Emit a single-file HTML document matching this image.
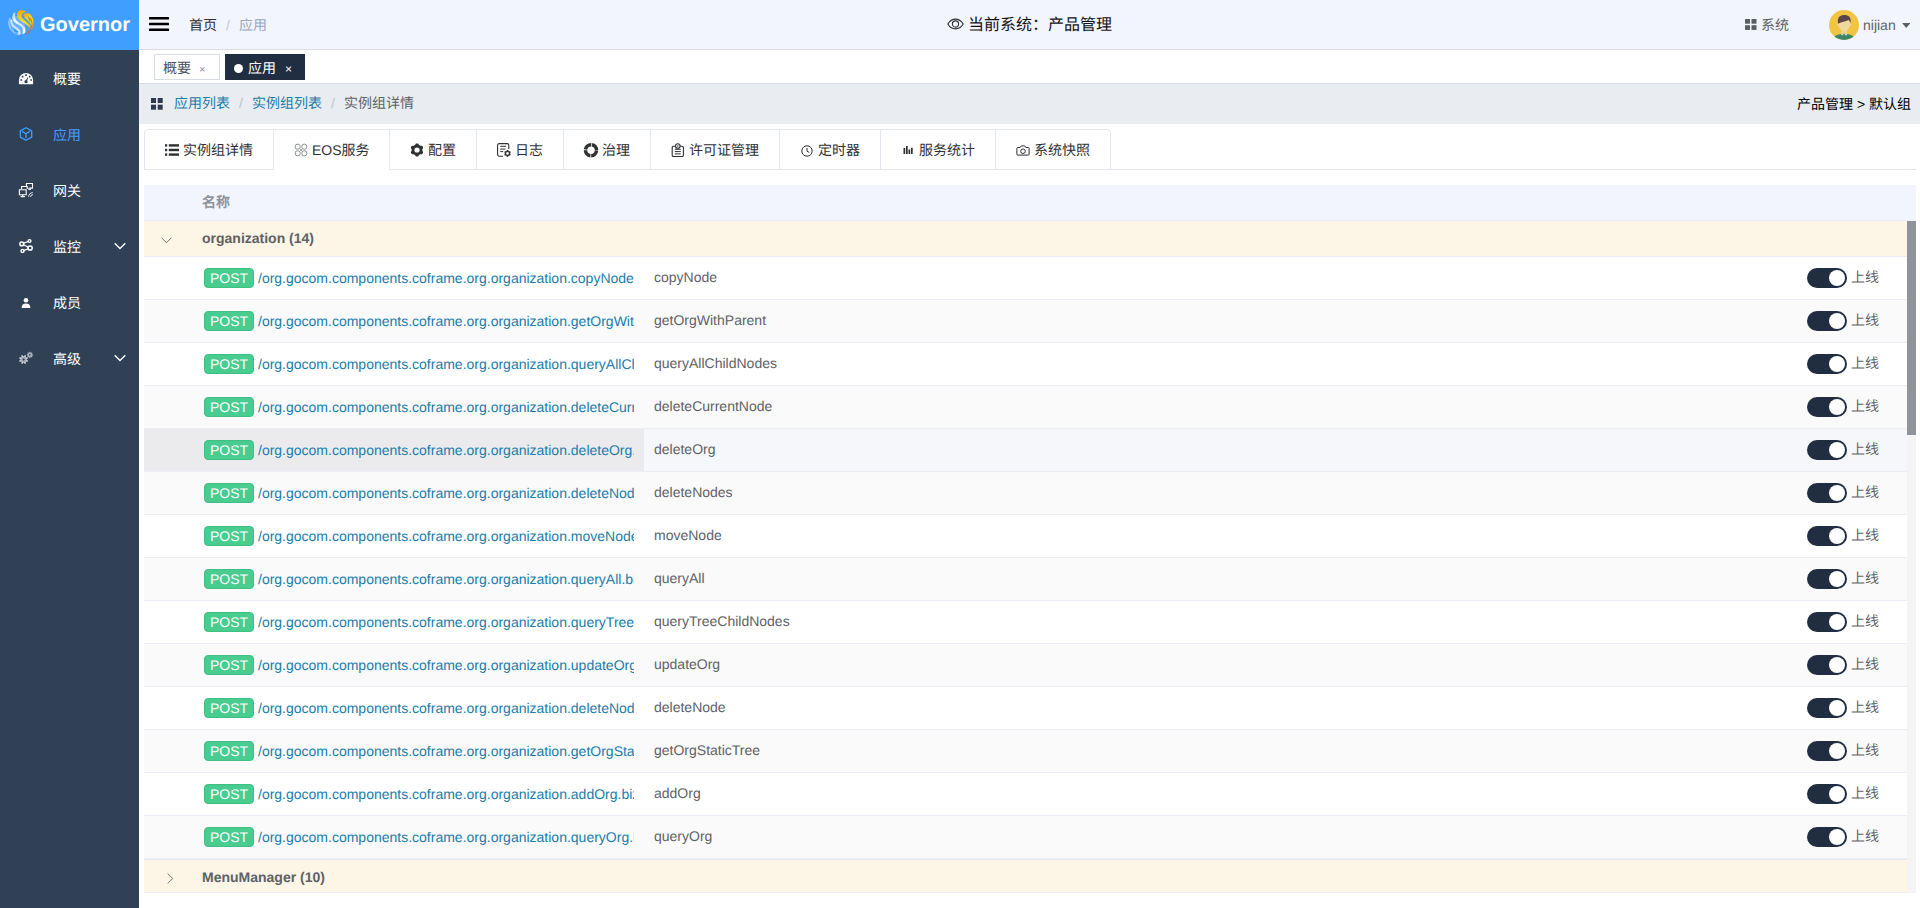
<!DOCTYPE html>
<html lang="zh-CN">
<head>
<meta charset="utf-8">
<title>Governor</title>
<style>
*{box-sizing:border-box;margin:0;padding:0}
html,body{width:1920px;height:908px;overflow:hidden;background:#fff}
body{position:relative;font-family:"Liberation Sans",sans-serif;font-size:14px;color:#606266;line-height:20px;text-rendering:geometricPrecision}
.abs{position:absolute}
.cj{display:inline-block;text-align:justify;text-align-last:justify;white-space:nowrap}
svg{display:block}
/* sidebar */
#side{position:absolute;left:0;top:0;width:139px;height:908px;background:#304156}
#logo{position:absolute;left:0;top:0;width:139px;height:50px;background:#409eff}
#logo .t{position:absolute;left:40px;top:13px;height:24px;line-height:24px;font-size:20px;font-weight:bold;color:#fff;white-space:nowrap}
.mi{position:absolute;left:0;width:139px;height:56px}
.mi .ic{position:absolute;left:19px;top:20px;width:14px;height:14px}
.mi .tx{position:absolute;left:53px;top:18px;height:20px;line-height:20px;font-size:14px;color:#fff;white-space:nowrap}
.mi.act .tx{color:#409eff}
.mi .ar{position:absolute;left:114px;top:23px;width:12px;height:8px}
/* navbar */
#nav{position:absolute;left:139px;top:0;width:1781px;height:50px;background:#f2f5fd;border-bottom:1px solid #dcdcde}
#nav .t{position:absolute;height:20px;line-height:20px;white-space:nowrap}
/* tags */
#tags{position:absolute;left:139px;top:50px;width:1781px;height:34px;background:#fff;border-bottom:1px solid #d8dce5}
.tag{position:absolute;top:4px;height:26px;line-height:24px;font-size:12px;border:1px solid #d8dce5;color:#495060;background:#fff;white-space:nowrap}
.tag.on{background:#212d40;border-color:#212d40;color:#fff}
/* crumb */
#crumb{position:absolute;left:139px;top:84px;width:1781px;height:40px;background:#e9ecf1}
#crumb .t{position:absolute;top:9px;height:20px;line-height:20px;white-space:nowrap;font-size:14px}
.lk{color:#1b7dab}
.sep{color:#c0c4cc}
/* tabs */
#tabs{position:absolute;left:144px;top:129px;width:1772px;height:41px;border-bottom:1px solid #e4e7ed}
.tab{position:absolute;top:0;height:41px;border:1px solid #e4e7ed;border-left:none;background:#fff}
.tab .ic{position:absolute;left:20px;top:13px;width:14px;height:14px}
.tab .tx{position:absolute;left:38px;top:10px;height:20px;line-height:20px;color:#303133;font-size:14px;white-space:nowrap}
/* table */
#th{position:absolute;left:144px;top:185px;width:1772px;height:36px;background:#f2f5fd;border-bottom:1px solid #ebeef5}
.grp{position:absolute;left:144px;width:1763px;height:36px;background:#fdf5e6;border-bottom:1px solid #ebeef5}
.grp .tx{position:absolute;left:58px;top:7px;height:20px;line-height:20px;font-weight:bold;color:#606266;white-space:nowrap}
.row{position:absolute;left:144px;width:1763px;height:43px;border-bottom:1px solid #ebeef5;background:#fff}
.row.s{background:#fafafa}
.row.hv{background:#f5f7fa}
.row.hv .fx{position:absolute;left:0;top:0;width:500px;height:42px;background:#ebebed}
.row .post{position:absolute;left:60px;top:11px;width:50px;height:20px;line-height:18px;border-radius:4px;background:#49cc90;color:#fff;text-align:center;font-size:14px;border:1px solid #3fbf83}
.row .url{position:absolute;left:114px;top:11px;width:376px;height:20px;line-height:20px;overflow:hidden;white-space:nowrap;color:#1b7dab}
.row .nm{position:absolute;left:510px;top:10px;height:20px;line-height:20px;white-space:nowrap;color:#606266}
.row .sw{position:absolute;left:1663px;top:11px;width:40px;height:20px;border-radius:10px;background:#212d40}
.row .sw i{position:absolute;left:22px;top:2px;width:16px;height:16px;border-radius:8px;background:#fff}
.row .on{position:absolute;left:1707px;top:10px;height:20px;line-height:20px;white-space:nowrap;color:#606266}
</style>
</head>
<body>
<!-- SIDEBAR -->
<div id="side">
  <div id="logo"><svg class="abs" style="left:8px;top:10px" width="26" height="26" viewBox="0 0 26 26">
<defs>
<clipPath id="lc"><circle cx="13" cy="13" r="12.900"/></clipPath>
<linearGradient id="ly" x1="0.25" y1="0" x2="0.6" y2="1"><stop offset="0" stop-color="#ffa000"/><stop offset="0.22" stop-color="#ffc800"/><stop offset="0.5" stop-color="#ffe51a"/><stop offset="0.72" stop-color="#ffc414"/><stop offset="0.86" stop-color="#ee7f1c"/><stop offset="1" stop-color="#d8501c"/></linearGradient>
<linearGradient id="ly2" x1="0" y1="0" x2="0.5" y2="1"><stop offset="0" stop-color="#ff9a00"/><stop offset="0.3" stop-color="#ffc60a"/><stop offset="0.8" stop-color="#ffd414"/><stop offset="1" stop-color="#f5a51c"/></linearGradient>
<linearGradient id="lw" x1="0" y1="0" x2="0.5" y2="1"><stop offset="0" stop-color="#9fd0f7"/><stop offset="0.4" stop-color="#ffffff"/><stop offset="0.8" stop-color="#d4e9f8"/><stop offset="1" stop-color="#ffffff"/></linearGradient>
<filter id="lf" x="-10%" y="-10%" width="120%" height="120%"><feGaussianBlur stdDeviation="0.450"/></filter>
</defs>
<g clip-path="url(#lc)" filter="url(#lf)">
<ellipse cx="8.500" cy="15.500" rx="8.500" ry="10" fill="#fff" opacity=".2" transform="rotate(-25 8.500 15.500)"/>
<path d="M1.800 7C.3 10.500 .3 15 2.500 18.500 3.500 20 5 21.500 7 22.500" fill="none" stroke="#fff" stroke-width="1" opacity=".45"/>
<path d="M5 3.300C3.500 5.500 3.500 8 4.500 10" fill="none" stroke="#1685cc" stroke-width="1.100" opacity=".8"/>
<path d="M2.300 9.500C1.800 12.800 2.900 15.500 5.500 17.600c2 1.400 4 2.400 4.500 4.400 .2 1-.2 1.800-1 2.500L12 24.800c1-1.800 .8-3.800-.5-5.300-1.500-1.700-4-2.500-5.700-4.500C4.500 13.500 4 11.500 4.300 9.300z" fill="#fff" opacity=".66"/>
<path d="M6 20c1.500 1.500 3 2 4 1.500" fill="none" stroke="#1685cc" stroke-width="1.300" opacity=".7"/>
<path d="M5.300 2.900C3.700 5.200 3.700 8.800 5.900 11.500c2.100 2.500 6.100 3.500 7.900 5.800 1.200 1.500 1.500 4 .5 7.200L17 23c1-2.500 .5-5-1-6.800-2-2.400-6-3.700-7.700-6C6.800 8 6.500 5 7.500 2.500z" fill="url(#lw)" opacity=".93"/>
<path d="M12.100 .1C9.500 1.500 8.600 3.500 9.100 5.400c.2 1.600 1.400 3.600 3.800 5.600 2.100 1.500 5.600 3.500 7.100 5.200 1 1.300 1.300 2.800 .7 4.300-.7 2-3.200 4-6 5.100l2.300-.8c2.500-.8 4.500-2.300 5.300-4.300 1-2 .7-4-.1-5-1.200-2-4.200-4-6-5.600-1.700-1.400-2.900-2.900-2.600-4.400 .2-1.500 1.900-3 4.500-3.900C16 .3 14-.2 12.100 .1z" fill="url(#ly)"/>
<path d="M15.500 4.200c1-.9 4.500-1.700 6.700-.3 1.800 1.100 3.100 4.100 3.400 7.100 .2 3-.6 6.500-2.600 9.700 1-2.200 1.200-3.700 .7-4.800-.7-1.900-3.200-4.400-5.200-6.400-1.700-1.500-3-3-3-5.300z" fill="url(#ly2)"/>
<path d="M20.300 6.500c1.500 1.500 2 3.500 1.500 5.500-.5-2-1-3.500-1.500-5.500z" fill="#409eff" stroke="#409eff" stroke-width=".5"/>
<path d="M22.200 8.200c1.600 2.300 2.300 5.800 1.600 9.300" fill="none" stroke="#e27018" stroke-width="1.100" opacity=".95"/>
</g>
</svg><div class="t">Governor</div></div>
  <div class="mi" style="top:51px"><svg class="ic" viewBox="0 0 14 14" style="overflow:visible"><path d="M-.1 12.400V9.100A7.100 7.100 0 0 1 14.100 9.100v3.300a.9.900 0 0 1-.9.900H.8a.9.900 0 0 1-.9-.900z" fill="#fff"/><g fill="#304156"><rect x="1.350" y="8.150" width="1.700" height="1.700" rx=".3"/><rect x="2.750" y="4.750" width="1.700" height="1.700" rx=".5"/><rect x="6.150" y="3.350" width="1.700" height="1.700" rx=".3"/><rect x="9.800" y="4.750" width="1.700" height="1.700" rx=".5"/><rect x="11.250" y="8.150" width="1.700" height="1.700" rx=".3"/><circle cx="7" cy="10.700" r="1.600"/><path d="M6.500 10.500L8.200 6.400l1 .4-1.700 4.100z"/></g></svg><div class="tx"><span class="cj" style="width:2em">概要</span></div></div>
  <div class="mi act" style="top:107px"><svg class="ic" viewBox="0 0 14 14" fill="none" stroke="#409eff" stroke-width="1.300" stroke-linejoin="round"><path d="M7 .7l5.700 3.150v6.300L7 13.300 1.300 10.150v-6.300z"/><path d="M3.600 4.600L7 6.700l3.400-2.100M7 6.700v4" stroke-linecap="round"/></svg><div class="tx"><span class="cj" style="width:2em">应用</span></div></div>
  <div class="mi" style="top:163px"><svg class="ic" viewBox="0 0 14 14" fill="none" stroke="#fff" stroke-width="1.100" style="overflow:visible"><path d="M7.400 3V.5h6.100v4.600H9.500"/><path d="M9.300 6.300h2.600" stroke-width="1.200"/><path d="M2.600 6V3.500h5.600v2.400"/><path d="M.4 6.700h6.800v5H.4z"/><path d="M3.800 11.700v1.600M1.600 13.600h4.400" stroke-width="1.200"/><path d="M9.600 13.800a4.200 4.200 0 0 1 4.200-4.200M11.600 13.900a2.300 2.300 0 0 1 2.300-2.300" stroke-width="1" opacity=".9"/></svg><div class="tx"><span class="cj" style="width:2em">网关</span></div></div>
  <div class="mi" style="top:219px"><svg class="ic" viewBox="0 0 14 14" fill="none" stroke="#fff" stroke-width="1.500" style="overflow:visible"><circle cx="2.800" cy="4.900" r="1.900"/><circle cx="10.500" cy="2" r="1.400" stroke-width="1.400"/><circle cx="11.100" cy="9" r="2.100"/><circle cx="3.500" cy="11.900" r="1.500" stroke-width="1.400"/><path d="M4.600 5.700l4.600 2.500M5 11.300l4.200-1.500M4.700 4.200l4.400-1.700" stroke-width="1.300"/></svg><div class="tx"><span class="cj" style="width:2em">监控</span></div><svg class="ar" viewBox="0 0 12 8" fill="none" stroke="#fff" stroke-width="1.300"><path d="M.7 1.200L6 6.500l5.300-5.300"/></svg></div>
  <div class="mi" style="top:275px"><svg class="ic" viewBox="0 0 14 14" fill="#fff"><circle cx="7" cy="5.200" r="2.300"/><path d="M2.700 12.400c0-2.500 1.600-3.800 4.300-3.800s4.300 1.300 4.300 3.800v.200a.5.500 0 0 1-.5.500H3.200a.5.500 0 0 1-.5-.5z"/></svg><div class="tx"><span class="cj" style="width:2em">成员</span></div></div>
  <div class="mi" style="top:331px"><svg class="ic" viewBox="0 0 14 14" style="overflow:visible"><path fill="#d0d4db" fill-rule="evenodd" d="M7.80 8.50 L7.80 8.71 L7.84 8.93 L8.47 9.27 L9.07 9.70 L9.05 10.01 L8.94 10.30 L8.81 10.58 L8.61 10.82 L7.88 10.69 L7.19 10.49 L7.01 10.61 L6.86 10.76 L6.71 10.91 L6.59 11.09 L6.79 11.78 L6.92 12.51 L6.68 12.71 L6.40 12.84 L6.11 12.95 L5.80 12.97 L5.37 12.37 L5.03 11.74 L4.81 11.70 L4.60 11.70 L4.39 11.70 L4.17 11.74 L3.83 12.37 L3.40 12.97 L3.09 12.95 L2.80 12.84 L2.52 12.71 L2.28 12.51 L2.41 11.78 L2.61 11.09 L2.49 10.91 L2.34 10.76 L2.19 10.61 L2.01 10.49 L1.32 10.69 L0.59 10.82 L0.39 10.58 L0.26 10.30 L0.15 10.01 L0.13 9.70 L0.73 9.27 L1.36 8.93 L1.40 8.71 L1.40 8.50 L1.40 8.29 L1.36 8.07 L0.73 7.73 L0.13 7.30 L0.15 6.99 L0.26 6.70 L0.39 6.42 L0.59 6.18 L1.32 6.31 L2.01 6.51 L2.19 6.39 L2.34 6.24 L2.49 6.09 L2.61 5.91 L2.41 5.22 L2.28 4.49 L2.52 4.29 L2.80 4.16 L3.09 4.05 L3.40 4.03 L3.83 4.63 L4.17 5.26 L4.39 5.30 L4.60 5.30 L4.81 5.30 L5.03 5.26 L5.37 4.63 L5.80 4.03 L6.11 4.05 L6.40 4.16 L6.68 4.29 L6.92 4.49 L6.79 5.22 L6.59 5.91 L6.71 6.09 L6.86 6.24 L7.01 6.39 L7.19 6.51 L7.88 6.31 L8.61 6.18 L8.81 6.42 L8.94 6.70 L9.05 6.99 L9.07 7.30 L8.47 7.73 L7.84 8.07 L7.80 8.29zM3.35 8.50a1.25 1.25 0 1 0 2.5 0a1.25 1.25 0 1 0 -2.5 0z"/><circle cx="4.600" cy="8.500" r="2.350" fill="none" stroke="#304156" stroke-width=".55" opacity=".55"/><path fill="#a9b1bd" fill-rule="evenodd" d="M14.15 3.90 L14.13 4.11 L14.03 4.31 L13.65 4.45 L13.26 4.53 L13.14 4.66 L13.07 4.80 L13.02 4.94 L13.02 5.12 L13.23 5.46 L13.40 5.82 L13.33 6.04 L13.20 6.20 L13.04 6.33 L12.82 6.40 L12.46 6.23 L12.12 6.02 L11.94 6.02 L11.80 6.07 L11.66 6.14 L11.53 6.26 L11.45 6.65 L11.31 7.03 L11.11 7.13 L10.90 7.15 L10.69 7.13 L10.49 7.03 L10.35 6.65 L10.27 6.26 L10.14 6.14 L10.00 6.07 L9.86 6.02 L9.68 6.02 L9.34 6.23 L8.98 6.40 L8.76 6.33 L8.60 6.20 L8.47 6.04 L8.40 5.82 L8.57 5.46 L8.78 5.12 L8.78 4.94 L8.73 4.80 L8.66 4.66 L8.54 4.53 L8.15 4.45 L7.77 4.31 L7.67 4.11 L7.65 3.90 L7.67 3.69 L7.77 3.49 L8.15 3.35 L8.54 3.27 L8.66 3.14 L8.73 3.00 L8.78 2.86 L8.78 2.68 L8.57 2.34 L8.40 1.98 L8.47 1.76 L8.60 1.60 L8.76 1.47 L8.98 1.40 L9.34 1.57 L9.68 1.78 L9.86 1.78 L10.00 1.73 L10.14 1.66 L10.27 1.54 L10.35 1.15 L10.49 0.77 L10.69 0.67 L10.90 0.65 L11.11 0.67 L11.31 0.77 L11.45 1.15 L11.53 1.54 L11.66 1.66 L11.80 1.73 L11.94 1.78 L12.12 1.78 L12.46 1.57 L12.82 1.40 L13.04 1.47 L13.20 1.60 L13.33 1.76 L13.40 1.98 L13.23 2.34 L13.02 2.68 L13.02 2.86 L13.07 3.00 L13.14 3.14 L13.26 3.27 L13.65 3.35 L14.03 3.49 L14.13 3.69zM10.10 3.90a0.8 0.8 0 1 0 1.6 0a0.8 0.8 0 1 0 -1.6 0z"/></svg><div class="tx"><span class="cj" style="width:2em">高级</span></div><svg class="ar" viewBox="0 0 12 8" fill="none" stroke="#fff" stroke-width="1.300"><path d="M.7 1.200L6 6.500l5.300-5.300"/></svg></div>
</div>
<!-- NAVBAR -->
<div id="nav">
  <svg class="abs" style="left:10px;top:16px" width="20" height="16" viewBox="0 0 20 16" fill="#000"><rect x="0" y="1" width="20" height="2.400" rx=".5"/><rect x="0" y="6.800" width="20" height="2.400" rx=".5"/><rect x="0" y="12.600" width="20" height="2.400" rx=".5"/></svg>
  <svg class="abs" style="left:808px;top:17px" width="17" height="14" viewBox="0 0 17 14" fill="none" stroke="#303133" stroke-width="1.100"><path d="M.8 7C2.800 3.700 5.400 2.100 8.500 2.100S14.200 3.700 16.200 7C14.200 10.300 11.600 11.900 8.500 11.900S2.800 10.300 .8 7z"/><circle cx="8.500" cy="7" r="3.100"/></svg>
  <svg class="abs" style="left:1606px;top:19px" width="12" height="11" viewBox="0 0 12 11" fill="#5a5e66"><rect x="0" y="0" width="5" height="4.700"/><rect x="6.500" y="0" width="5" height="4.700"/><rect x="0" y="6.200" width="5" height="4.700"/><rect x="6.500" y="6.200" width="5" height="4.700"/></svg>
  <svg class="abs" style="left:1690px;top:10px" width="30" height="30" viewBox="0 0 30 30"><defs><clipPath id="av"><circle cx="15" cy="15" r="15"/></clipPath></defs><g clip-path="url(#av)"><rect width="30" height="30" fill="#f2c444"/><rect x="12.200" y="18" width="5.800" height="7" fill="#ecd096"/><circle cx="9.300" cy="14.800" r="1.200" fill="#efd7a0"/><circle cx="21.100" cy="14.800" r="1.200" fill="#efd7a0"/><ellipse cx="15.200" cy="14.300" rx="5.700" ry="6.700" fill="#efd7a0"/><path d="M9.300 13.800C7.900 9 10 5.100 15 5.100c4.600 0 7.600 2.400 6.600 7.700-.5-1.200-1.200-2.200-1.900-2.800-3 1.400-7.600 1.900-10.400 3.800z" fill="#5b4747"/><ellipse cx="15" cy="30.600" rx="12.200" ry="6.900" fill="#3f8565"/><path d="M12.300 24h2.200l-.6 1.300h-1.600zM15.700 24h2.300v1.300h-1.700z" fill="#e3ece6" opacity=".9"/></g></svg>
  <svg class="abs" style="left:1762.500px;top:23px" width="8.500" height="5.500" viewBox="0 0 9 6" fill="#5a5e66"><path d="M0 0h9L4.500 5.500z"/></svg>
  <div class="t" style="left:50px;top:15px;color:#303133"><span class="cj" style="width:2em">首页</span></div>
  <div class="t sep" style="left:87px;top:15px">/</div>
  <div class="t" style="left:100px;top:15px;color:#97a8be"><span class="cj" style="width:2em">应用</span></div>
  <div class="t" style="left:829px;top:15px;font-size:16px;line-height:22px;height:22px;color:#111"><span class="cj" style="width:9em">当前系统：产品管理</span></div>
  <div class="t" style="left:1622px;top:15px;color:#606266"><span class="cj" style="width:2em">系统</span></div>
  <div class="t" style="left:1724px;top:15px;color:#606266">nijian</div>
</div>
<!-- TAGS -->
<div id="tags">
  <div class="tag" style="left:15px;width:66px"><span class="abs" style="left:8px;top:1px;font-size:14px"><span class="cj" style="width:2em">概要</span></span><span class="abs" style="left:44px;top:3px;font-size:11px;color:#8a909c">×</span></div>
  <div class="tag on" style="left:86px;width:80px"><span class="abs" style="left:8px;top:9px;width:9px;height:9px;border-radius:5px;background:#fff"></span><span class="abs" style="left:22px;top:1px;font-size:14px"><span class="cj" style="width:2em">应用</span></span><span class="abs" style="left:59px;top:2px;font-size:12px">×</span></div>
</div>
<!-- BREADCRUMB -->
<div id="crumb">
  <svg class="abs" style="left:12px;top:14px" width="12" height="12" viewBox="0 0 12 12" fill="#2f3a4d"><rect x="0" y="0" width="5" height="5"/><rect x="6.700" y="0" width="5" height="5"/><rect x="0" y="6.700" width="5" height="5"/><rect x="6.700" y="6.700" width="5" height="5"/></svg>
  <div class="t lk" style="left:35px"><span class="cj" style="width:4em">应用列表</span></div>
  <div class="t sep" style="left:100px">/</div>
  <div class="t lk" style="left:113px"><span class="cj" style="width:5em">实例组列表</span></div>
  <div class="t sep" style="left:192px">/</div>
  <div class="t" style="left:205px;color:#606266"><span class="cj" style="width:5em">实例组详情</span></div>
  <div class="t" style="left:1658px;top:10px;color:#000"><span class="cj" style="width:4em">产品管理</span> &gt; <span class="cj" style="width:3em">默认组</span></div>
</div>
<!-- TABS -->
<div id="tabs">
  <div class="tab" style="left:0;width:130px;border-left:1px solid #e4e7ed;border-radius:4px 0 0 0"><svg class="ic" viewBox="0 0 14 14" fill="#303133"><rect x="0" y="1.200" width="2.200" height="2.400"/><rect x="3.800" y="1.200" width="10.200" height="2.400"/><rect x="0" y="5.800" width="2.200" height="2.400"/><rect x="3.800" y="5.800" width="10.200" height="2.400"/><rect x="0" y="10.400" width="2.200" height="2.400"/><rect x="3.800" y="10.400" width="10.200" height="2.400"/></svg><div class="tx" style="left:38px"><span class="cj" style="width:5em">实例组详情</span></div></div>
  <div class="tab" style="left:130px;width:116px;border-bottom-color:#fff"><svg class="ic" viewBox="0 0 14 14" fill="none" stroke="#8d9095" stroke-width="1"><rect x="1.200" y="1.200" width="5" height="5" rx="2.200"/><rect x="7.800" y="1.200" width="5" height="5" rx="2.200"/><rect x="1.200" y="7.800" width="5" height="5" rx="2.200"/><rect x="7.800" y="7.800" width="5" height="5" rx="2.200"/><path d="M5.500 5.500l3 3M8.500 5.500l-3 3" stroke-width=".8"/></svg><div class="tx">EOS<span class="cj" style="width:2em">服务</span></div></div>
  <div class="tab" style="left:246px;width:87px"><svg class="ic" viewBox="0 0 14 14"><path fill="#303133" fill-rule="evenodd" d="M12.38 7.00 L12.37 7.35 L12.37 7.71 L12.46 8.09 L12.80 8.55 L13.09 9.07 L13.08 9.52 L12.93 9.93 L12.73 10.31 L12.50 10.67 L12.22 11.01 L11.84 11.24 L11.24 11.24 L10.67 11.18 L10.30 11.30 L9.99 11.48 L9.69 11.66 L9.38 11.83 L9.07 12.01 L8.79 12.27 L8.55 12.80 L8.26 13.31 L7.86 13.52 L7.43 13.60 L7.00 13.62 L6.57 13.60 L6.14 13.52 L5.74 13.31 L5.45 12.80 L5.21 12.27 L4.93 12.01 L4.62 11.83 L4.31 11.66 L4.01 11.48 L3.70 11.30 L3.33 11.18 L2.76 11.24 L2.16 11.24 L1.78 11.01 L1.50 10.67 L1.27 10.31 L1.07 9.93 L0.92 9.52 L0.91 9.07 L1.20 8.55 L1.54 8.09 L1.63 7.71 L1.63 7.35 L1.62 7.00 L1.63 6.65 L1.63 6.29 L1.54 5.91 L1.20 5.45 L0.91 4.93 L0.92 4.48 L1.07 4.07 L1.27 3.69 L1.50 3.33 L1.78 2.99 L2.16 2.76 L2.76 2.76 L3.33 2.82 L3.70 2.70 L4.01 2.52 L4.31 2.34 L4.62 2.17 L4.93 1.99 L5.21 1.73 L5.45 1.20 L5.74 0.69 L6.14 0.48 L6.57 0.40 L7.00 0.38 L7.43 0.40 L7.86 0.48 L8.26 0.69 L8.55 1.20 L8.79 1.73 L9.07 1.99 L9.38 2.17 L9.69 2.34 L9.99 2.52 L10.30 2.70 L10.67 2.82 L11.24 2.76 L11.84 2.76 L12.22 2.99 L12.50 3.33 L12.73 3.69 L12.93 4.07 L13.08 4.48 L13.09 4.93 L12.80 5.45 L12.46 5.91 L12.37 6.29 L12.37 6.65zM4.40 7.00a2.6 2.6 0 1 0 5.2 0a2.6 2.6 0 1 0 -5.2 0z"/></svg><div class="tx"><span class="cj" style="width:2em">配置</span></div></div>
  <div class="tab" style="left:333px;width:87px"><svg class="ic" viewBox="0 0 14 14" fill="none" stroke="#303133" stroke-width="1.100"><path d="M6 13.200H2.200A1.600 1.600 0 0 1 .6 11.600v-9.400A1.600 1.600 0 0 1 2.200 .6h8a1.600 1.600 0 0 1 1.600 1.600V6"/><path d="M3.200 3.300h5.800M3.200 6.100h5.200M3.200 8.600h3" stroke-width="1"/><path fill="#303133" stroke="none" fill-rule="evenodd" d="M13.22 10.40 L13.22 10.58 L13.23 10.76 L13.31 10.96 L13.49 11.20 L13.66 11.47 L13.68 11.72 L13.62 11.94 L13.51 12.14 L13.39 12.33 L13.23 12.50 L13.01 12.60 L12.69 12.59 L12.39 12.55 L12.18 12.59 L12.01 12.67 L11.86 12.76 L11.71 12.85 L11.56 12.95 L11.42 13.11 L11.30 13.39 L11.15 13.68 L10.95 13.81 L10.73 13.87 L10.50 13.88 L10.27 13.87 L10.05 13.81 L9.85 13.68 L9.70 13.39 L9.58 13.11 L9.44 12.95 L9.29 12.85 L9.14 12.76 L8.99 12.67 L8.82 12.59 L8.61 12.55 L8.31 12.59 L7.99 12.60 L7.77 12.50 L7.61 12.33 L7.49 12.14 L7.38 11.94 L7.32 11.72 L7.34 11.47 L7.51 11.20 L7.69 10.96 L7.77 10.76 L7.78 10.58 L7.78 10.40 L7.78 10.22 L7.77 10.04 L7.69 9.84 L7.51 9.60 L7.34 9.33 L7.32 9.08 L7.38 8.86 L7.49 8.66 L7.61 8.47 L7.77 8.30 L7.99 8.20 L8.31 8.21 L8.61 8.25 L8.82 8.21 L8.99 8.13 L9.14 8.04 L9.29 7.95 L9.44 7.85 L9.58 7.69 L9.70 7.41 L9.85 7.12 L10.05 6.99 L10.27 6.93 L10.50 6.92 L10.73 6.93 L10.95 6.99 L11.15 7.12 L11.30 7.41 L11.42 7.69 L11.56 7.85 L11.71 7.95 L11.86 8.04 L12.01 8.13 L12.18 8.21 L12.39 8.25 L12.69 8.21 L13.01 8.20 L13.23 8.30 L13.39 8.47 L13.51 8.66 L13.62 8.86 L13.68 9.08 L13.66 9.33 L13.49 9.60 L13.31 9.84 L13.23 10.04 L13.22 10.22zM9.20 10.40a1.3 1.3 0 1 0 2.6 0a1.3 1.3 0 1 0 -2.6 0z"/></svg><div class="tx"><span class="cj" style="width:2em">日志</span></div></div>
  <div class="tab" style="left:420px;width:87px"><svg class="ic" viewBox="0 0 14 14" fill="none" stroke="#303133" style="overflow:visible"><circle cx="7" cy="7.200" r="5.500" stroke-width="3.500" stroke-dasharray="7.840 0.800" stroke-dashoffset="8.240"/></svg><div class="tx"><span class="cj" style="width:2em">治理</span></div></div>
  <div class="tab" style="left:507px;width:129px"><svg class="ic" viewBox="0 0 14 14" fill="none" stroke="#303133" stroke-width="1.100"><path d="M4.600 3.300H2.500A1.300 1.300 0 0 0 1.200 4.600v7.600a1.300 1.300 0 0 0 1.300 1.300h8.600a1.300 1.300 0 0 0 1.300-1.300V4.600a1.300 1.300 0 0 0-1.300-1.300H9"/><circle cx="6.800" cy="3" r="2.300"/><circle cx="6.800" cy="3" r=".7" fill="#303133" stroke="none"/><path d="M3.800 6.300h6M3.800 8.600h6M3.800 10.900h6" stroke-width="1"/></svg><div class="tx"><span class="cj" style="width:5em">许可证管理</span></div></div>
  <div class="tab" style="left:636px;width:101px"><svg class="ic" viewBox="0 0 14 14" fill="none" stroke="#303133" stroke-width="1"><circle cx="7" cy="8" r="5.200"/><path d="M7 5v3.200l2.200 1.200"/></svg><div class="tx"><span class="cj" style="width:3em">定时器</span></div></div>
  <div class="tab" style="left:737px;width:115px"><svg class="ic" viewBox="0 0 14 14" fill="#303133"><rect x="2.500" y="5" width="1.700" height="6"/><rect x="5" y="3" width="1.700" height="8"/><rect x="7.500" y="6.500" width="1.700" height="4.500"/><rect x="10" y="4.800" width="1.700" height="6.200"/></svg><div class="tx"><span class="cj" style="width:4em">服务统计</span></div></div>
  <div class="tab" style="left:852px;width:115px;border-radius:0 4px 0 0"><svg class="ic" viewBox="0 0 14 14" fill="none" stroke="#303133" stroke-width="1"><path d="M1.700 4.500h2.500l1-1.600h3.600l1 1.600h2.500a.8.8 0 0 1 .8.800v6a.8.800 0 0 1-.8.800H1.700a.8.800 0 0 1-.8-.8v-6a.8.800 0 0 1 .8-.8z"/><circle cx="7" cy="8.200" r="2.300"/></svg><div class="tx"><span class="cj" style="width:4em">系统快照</span></div></div>
</div>
<!-- TABLE -->
<div id="th"><div class="abs" style="left:58px;top:7px;height:20px;line-height:20px;font-weight:bold;color:#909399"><span class="cj" style="width:2em">名称</span></div></div>
<div id="tbody">
<div class="grp" style="top:221px"><svg class="abs" style="left:17px;top:16px" width="11" height="7" viewBox="0 0 11 7" fill="none" stroke="#6b6e74" stroke-width=".95"><path d="M.6 .8L5.500 5.700 10.400 .8"/></svg><div class="tx">organization (14)</div></div>
<div class="row" style="top:257px"><div class="post">POST</div><div class="url">/org.gocom.components.coframe.org.organization.copyNode.biz.ext</div><div class="nm">copyNode</div><div class="sw"><i></i></div><div class="on"><span class="cj" style="width:2em">上线</span></div></div>
<div class="row s" style="top:300px"><div class="post">POST</div><div class="url">/org.gocom.components.coframe.org.organization.getOrgWithParent.biz.ext</div><div class="nm">getOrgWithParent</div><div class="sw"><i></i></div><div class="on"><span class="cj" style="width:2em">上线</span></div></div>
<div class="row" style="top:343px"><div class="post">POST</div><div class="url">/org.gocom.components.coframe.org.organization.queryAllChildNodes.biz.ext</div><div class="nm">queryAllChildNodes</div><div class="sw"><i></i></div><div class="on"><span class="cj" style="width:2em">上线</span></div></div>
<div class="row s" style="top:386px"><div class="post">POST</div><div class="url">/org.gocom.components.coframe.org.organization.deleteCurrentNode.biz.ext</div><div class="nm">deleteCurrentNode</div><div class="sw"><i></i></div><div class="on"><span class="cj" style="width:2em">上线</span></div></div>
<div class="row hv" style="top:429px"><div class="fx"></div><div class="post">POST</div><div class="url">/org.gocom.components.coframe.org.organization.deleteOrg.biz.ext</div><div class="nm">deleteOrg</div><div class="sw"><i></i></div><div class="on"><span class="cj" style="width:2em">上线</span></div></div>
<div class="row s" style="top:472px"><div class="post">POST</div><div class="url">/org.gocom.components.coframe.org.organization.deleteNodes.biz.ext</div><div class="nm">deleteNodes</div><div class="sw"><i></i></div><div class="on"><span class="cj" style="width:2em">上线</span></div></div>
<div class="row" style="top:515px"><div class="post">POST</div><div class="url">/org.gocom.components.coframe.org.organization.moveNode.biz.ext</div><div class="nm">moveNode</div><div class="sw"><i></i></div><div class="on"><span class="cj" style="width:2em">上线</span></div></div>
<div class="row s" style="top:558px"><div class="post">POST</div><div class="url">/org.gocom.components.coframe.org.organization.queryAll.biz.ext</div><div class="nm">queryAll</div><div class="sw"><i></i></div><div class="on"><span class="cj" style="width:2em">上线</span></div></div>
<div class="row" style="top:601px"><div class="post">POST</div><div class="url">/org.gocom.components.coframe.org.organization.queryTreeChildNodes.biz.ext</div><div class="nm">queryTreeChildNodes</div><div class="sw"><i></i></div><div class="on"><span class="cj" style="width:2em">上线</span></div></div>
<div class="row s" style="top:644px"><div class="post">POST</div><div class="url">/org.gocom.components.coframe.org.organization.updateOrg.biz.ext</div><div class="nm">updateOrg</div><div class="sw"><i></i></div><div class="on"><span class="cj" style="width:2em">上线</span></div></div>
<div class="row" style="top:687px"><div class="post">POST</div><div class="url">/org.gocom.components.coframe.org.organization.deleteNode.biz.ext</div><div class="nm">deleteNode</div><div class="sw"><i></i></div><div class="on"><span class="cj" style="width:2em">上线</span></div></div>
<div class="row s" style="top:730px"><div class="post">POST</div><div class="url">/org.gocom.components.coframe.org.organization.getOrgStaticTree.biz.ext</div><div class="nm">getOrgStaticTree</div><div class="sw"><i></i></div><div class="on"><span class="cj" style="width:2em">上线</span></div></div>
<div class="row" style="top:773px"><div class="post">POST</div><div class="url">/org.gocom.components.coframe.org.organization.addOrg.biz.ext</div><div class="nm">addOrg</div><div class="sw"><i></i></div><div class="on"><span class="cj" style="width:2em">上线</span></div></div>
<div class="row s" style="top:816px"><div class="post">POST</div><div class="url">/org.gocom.components.coframe.org.organization.queryOrg.biz.ext</div><div class="nm">queryOrg</div><div class="sw"><i></i></div><div class="on"><span class="cj" style="width:2em">上线</span></div></div>
<div class="abs" style="left:144px;top:859px;width:1763px;height:1px;background:#e6e9f2"></div><div class="grp" style="top:860px;height:33px"><svg class="abs" style="left:22.500px;top:13px" width="7" height="11" viewBox="0 0 7 11" fill="none" stroke="#6b6e74" stroke-width=".95"><path d="M.8 .6L5.700 5.500 .8 10.400"/></svg><div class="tx">MenuManager (10)</div></div>
<div class="abs" style="left:1907px;top:221px;width:9px;height:672px;background:#f4f4f4"></div><div class="abs" style="left:1907px;top:221px;width:9px;height:214px;background:#909399"></div>
</div>
</body>
</html>
